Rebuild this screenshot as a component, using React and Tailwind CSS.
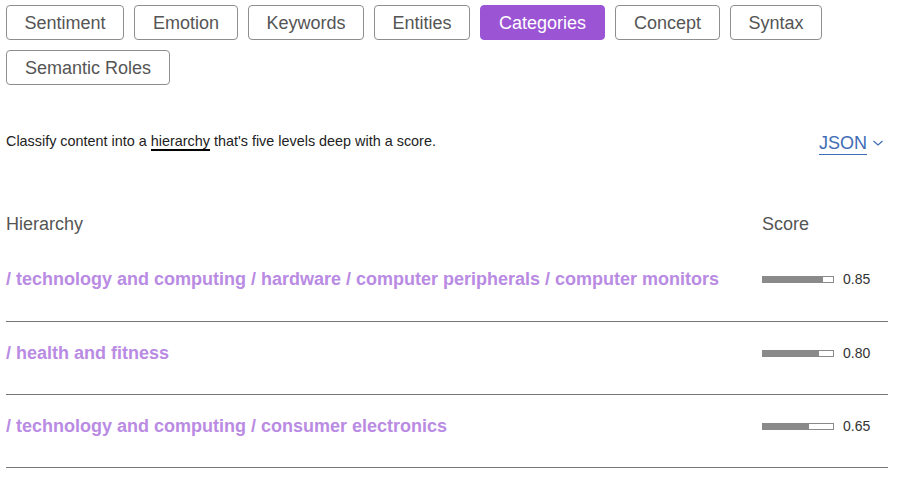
import React from "react";

const tabs = [
  { t: "Sentiment", w: "w-[118px]" },
  { t: "Emotion", w: "w-[104px]" },
  { t: "Keywords", w: "w-[116px]" },
  { t: "Entities", w: "w-[96px]" },
  { t: "Categories", w: "w-[125px]" },
  { t: "Concept", w: "w-[105px]" },
  { t: "Syntax", w: "w-[92px]" },
  { t: "Semantic Roles", w: "w-[164px]" },
];

const rows = [
  { label: "/ technology and computing / hardware / computer peripherals / computer monitors", score: 0.85 },
  { label: "/ health and fitness", score: 0.8 },
  { label: "/ technology and computing / consumer electronics", score: 0.65 },
];

export default function App() {
  return (
    <div className="w-[897px] h-[477px] bg-white overflow-hidden px-[6px] pt-[5px]" style={{ fontFamily: '"Liberation Sans", Arial, sans-serif' }}>
      <div className="flex flex-wrap gap-[10px]">
        {tabs.map(({ t, w }) =>
          t === "Categories" ? (
            <button key={t} className={`${w} h-[35px] rounded-[4px] border border-[#9b55d4] bg-[#9b55d4] text-white text-[18px] leading-none text-center`}>
              {t}
            </button>
          ) : (
            <button key={t} className={`${w} h-[35px] rounded-[4px] border border-[#8e8e8e] bg-white text-[#555] text-[18px] leading-none text-center`}>
              {t}
            </button>
          )
        )}
      </div>

      <div className="flex items-start justify-between mt-[46px] w-[882px] h-[24px]">
        <p className="text-[14.4px] text-[#222] leading-[20px]">
          Classify content into a{" "}
          <span className="border-b-2 border-black">hierarchy</span> that's five levels deep with a score.
        </p>
        <div className="flex items-center mr-[4px] mt-[1px]">
          <span className="text-[18px] text-[#3e6db5] leading-[22px] border-b border-[#3e6db5]">JSON</span>
          <svg width="12" height="8" viewBox="0 0 12 8" className="ml-[5px] mt-[-2px]">
            <path d="M1.5 2 L6 6 L10.5 2" fill="none" stroke="#3e6db5" strokeWidth="1.2" />
          </svg>
        </div>
      </div>

      <div className="w-[882px] mt-[57px]">
        <div className="flex text-[18px] text-[#555] leading-[24px] pb-[13px]">
          <div className="w-[756px]">Hierarchy</div>
          <div>Score</div>
        </div>
        {rows.map((r, i) => (
          <div key={r.label} className={`flex items-center border-b border-[#777] ${i === 0 ? "pt-[18px] pb-[30px]" : "pt-[19px] pb-[29px]"}`}>
            <div className="w-[756px] text-[18px] font-bold text-[#b98be3] leading-[24px]">
              {r.label}
            </div>
            <div className="flex items-center">
              <div className="w-[72px] h-[7px] border border-[#8a8a8a] bg-white">
                <div className="h-full bg-[#8a8a8a]" style={{ width: `${r.score * 100}%` }} />
              </div>
              <span className="ml-[9px] text-[14px] text-[#333] leading-[20px]">{r.score.toFixed(2)}</span>
            </div>
          </div>
        ))}
      </div>
    </div>
  );
}
